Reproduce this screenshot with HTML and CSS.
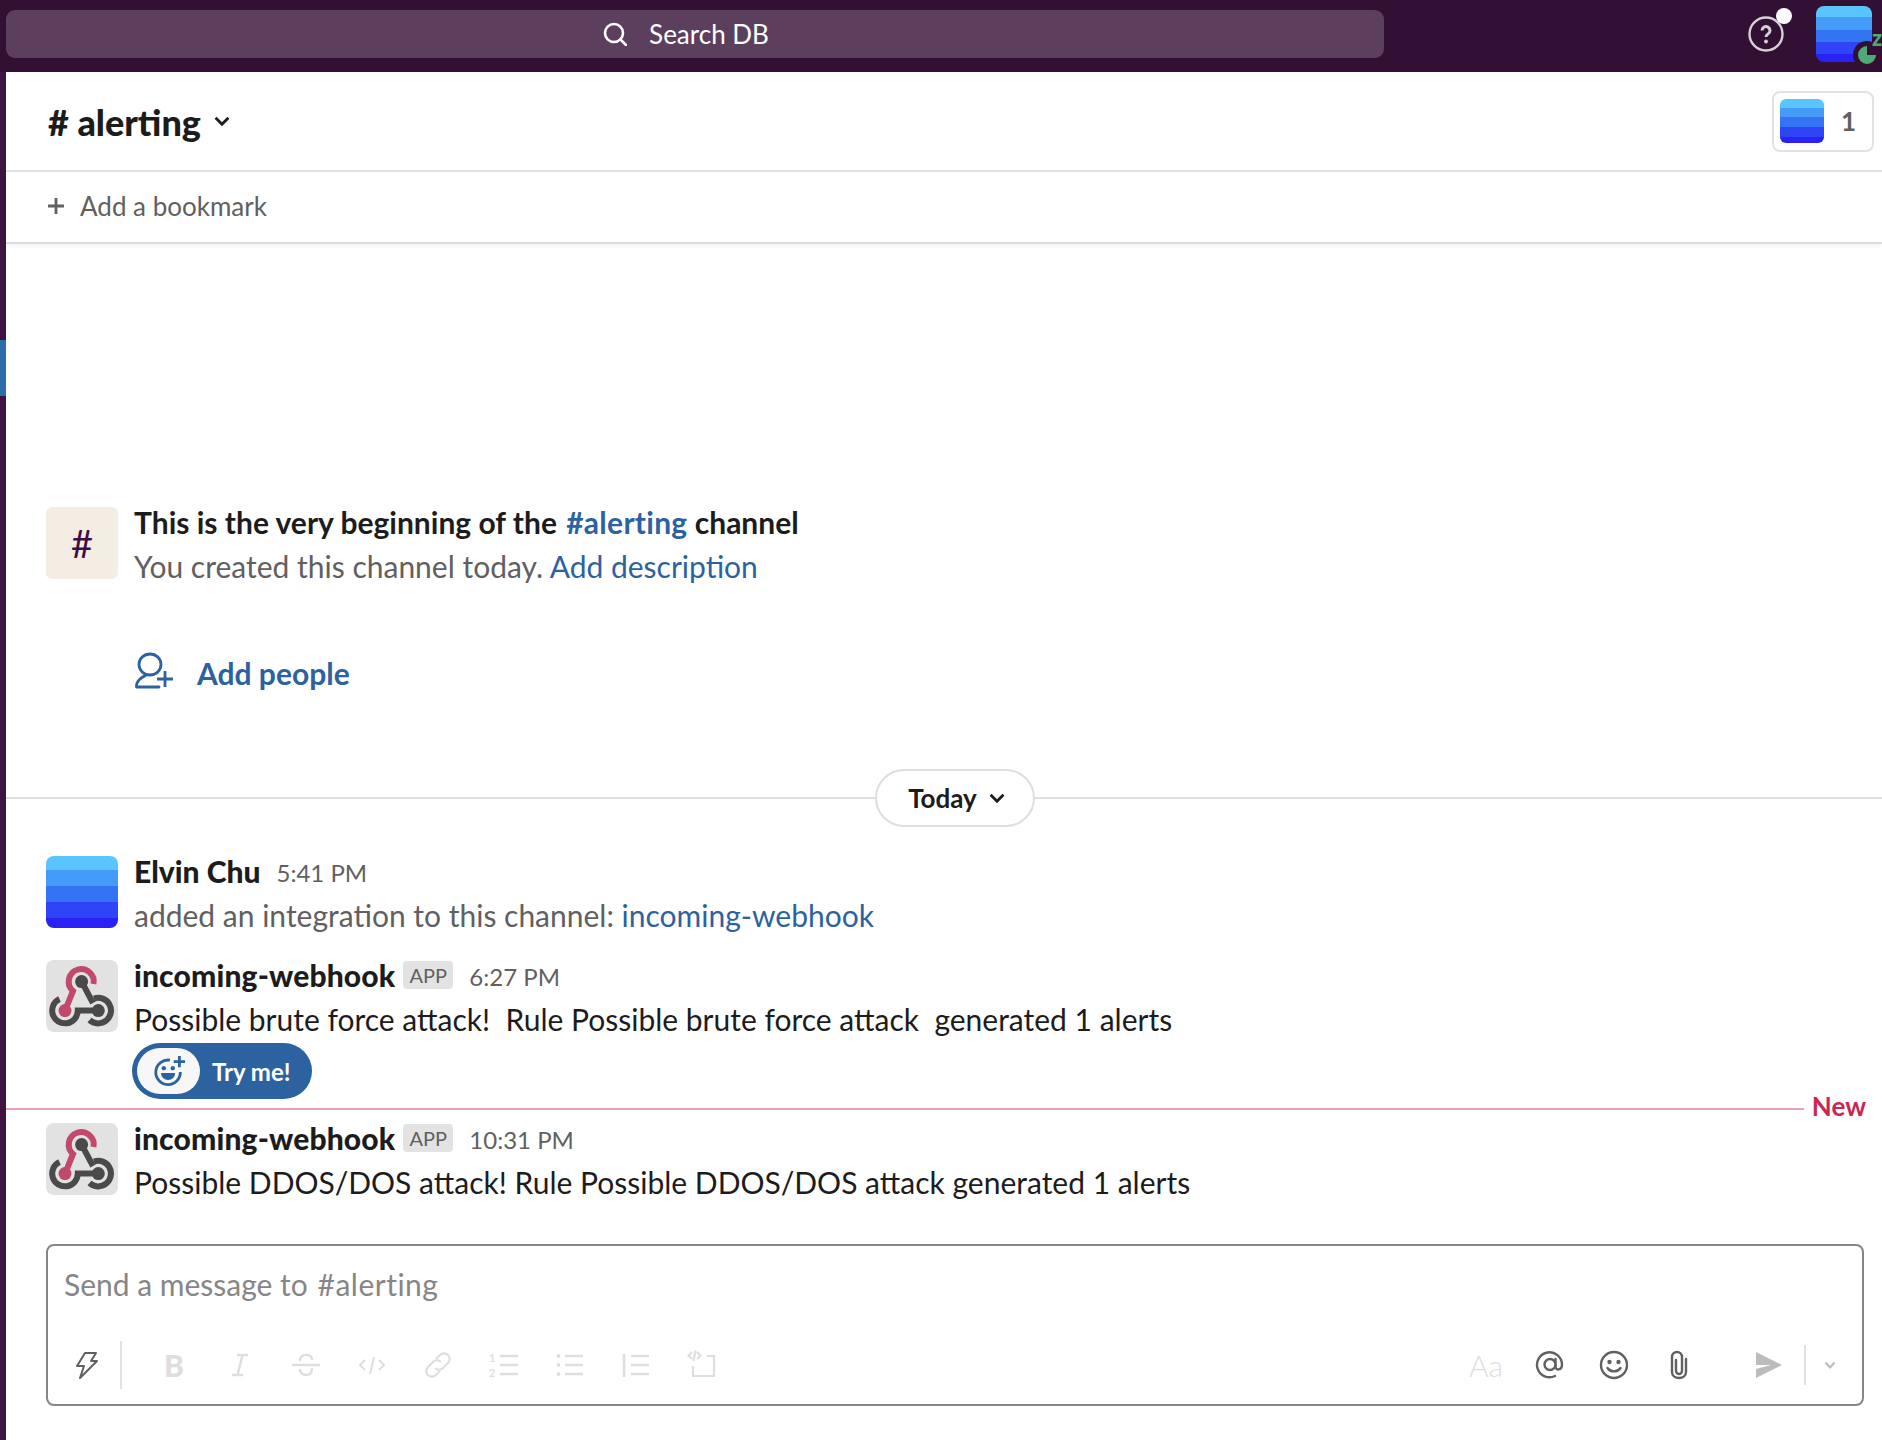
FILE: index.html
```html
<!DOCTYPE html>
<html lang="en">
<head>
<meta charset="utf-8">
<title>#alerting</title>
<link rel="stylesheet" href="styles.css">
</head>
<body>
<svg class="defs" width="0" height="0" aria-hidden="true">
  <symbol id="webhook" viewBox="0 0 72 72">
    <path d="M47.5 24A12.500 12.500 0 1 0 27 31L19 50.600" fill="none" stroke="#c0496c" stroke-width="6"/>
    <circle cx="19" cy="50.600" r="6.500" fill="#c0496c"/>
    <path d="M13.500 39A12.800 12.800 0 1 0 31.800 50.600H52" fill="none" stroke="#4a4a4a" stroke-width="6"/>
    <path d="M35.600 21.600L47 43" fill="none" stroke="#4a4a4a" stroke-width="6"/>
    <path d="M48 38.500A12.800 12.800 0 1 1 43.500 60" fill="none" stroke="#4a4a4a" stroke-width="6"/>
    <circle cx="35.600" cy="21.600" r="6.500" fill="#4a4a4a"/>
    <circle cx="52.300" cy="50.600" r="6.500" fill="#4a4a4a"/>
  </symbol>
</svg>
<div class="app">
  <header class="topbar">
    <div class="search">
      <svg class="search-icon" viewBox="0 0 24 24"><circle cx="11" cy="11" r="9" fill="none" stroke="#fff" stroke-width="2.600"/><path d="M17.500 17.500L23 23" stroke="#fff" stroke-width="2.600" stroke-linecap="round"/></svg>
      <span>Search DB</span>
    </div>
    <div class="top-actions">
      <div class="help">
        <svg viewBox="0 0 36 36" class="help-icon"><circle cx="18" cy="18" r="16.500" fill="none" stroke="#d6cfd6" stroke-width="2.400"/><path d="M14 14.500a4 4 0 1 1 6 3.500c-1.500 .9-2 1.500-2 3" fill="none" stroke="#d6cfd6" stroke-width="3"/><circle cx="18" cy="25.500" r="1.900" fill="#d6cfd6"/></svg>
        <span class="help-dot"></span>
      </div>
      <div class="me">
        <div class="stripes me-avatar"></div>
        <span class="presence">
          <svg viewBox="0 0 28 28"><path d="M14 5v9h9A9 9 0 1 1 14 5z" fill="#4fa974"/></svg>
        </span>
        <span class="presence-z">z</span>
      </div>
    </div>
  </header>
  <div class="body">
    <div class="strip"><span class="strip-active"></span></div>
    <main class="main">
      <div class="channel-head">
        <h1 class="channel-title"># alerting</h1>
        <svg class="chev" viewBox="0 0 14 14"><path d="M2 4.500L7 9.500l5-5" fill="none" stroke="#1d1c1d" stroke-width="2.200"/></svg>
        <div class="members"><div class="stripes members-avatar"></div><span>1</span></div>
      </div>
      <div class="bookmarks">
        <svg class="plus" viewBox="0 0 18 18"><path d="M9 1v16M1 9h16" stroke="#616061" stroke-width="2.800"/></svg>
        <span>Add a bookmark</span>
      </div>
      <div class="scroller">
        <section class="intro">
          <div class="intro-hash">#</div>
          <div>
            <div class="line strong">This is the very beginning of the <a class="link tag">#alerting</a> channel</div>
            <div class="line muted">You created this channel today. <a class="link">Add description</a></div>
          </div>
        </section>
        <div class="add-people">
          <svg viewBox="0 0 42 42" class="add-icon"><ellipse cx="16" cy="12.500" rx="11" ry="10.500" fill="none" stroke="#2c62a0" stroke-width="2.800"/><path d="M12 23C7 26 2 29 2.500 35H25" fill="none" stroke="#2c62a0" stroke-width="2.800" stroke-linecap="round" stroke-linejoin="round"/><path d="M31 19v16M23 27h16" fill="none" stroke="#2c62a0" stroke-width="2.800"/></svg>
          <a class="link add-text">Add people</a>
        </div>
        <div class="day">
          <span class="rule rule-left"></span>
          <div class="pill">Today<svg class="chev-small" viewBox="0 0 14 14"><path d="M2 4.500L7 9.500l5-5" fill="none" stroke="#1d1c1d" stroke-width="2.200"/></svg></div>
          <span class="rule"></span>
        </div>
        <article class="msg msg-first">
          <div class="stripes avatar"></div>
          <div class="msg-body">
            <div class="line meta"><b class="name">Elvin Chu</b><time class="time">5:41 PM</time></div>
            <div class="line muted">added an integration to this channel: <a class="link">incoming-webhook</a></div>
          </div>
        </article>
        <article class="msg">
          <div class="avatar app-avatar"><svg><use href="#webhook"/></svg></div>
          <div class="msg-body">
            <div class="line meta"><b class="name name-app">incoming-webhook</b><span class="app-tag">APP</span><time class="time">6:27 PM</time></div>
            <div class="line text">Possible brute force attack!&nbsp; Rule Possible brute force attack&nbsp; generated 1 alerts</div>
            <div class="try">
              <span class="try-knob">
                <svg viewBox="0 0 36 36"><path d="M19 6.500A13 13 0 1 0 30 19" fill="none" stroke="#2c62a0" stroke-width="3"/><path d="M29 2v12M23 8h12" stroke="#2c62a0" stroke-width="3"/><circle cx="12.500" cy="15" r="2.300" fill="#2c62a0"/><circle cx="22" cy="15" r="2.300" fill="#2c62a0"/><path d="M9.500 20h15a7.500 7.500 0 0 1-15 0z" fill="#2c62a0"/></svg>
              </span>
              <span>Try me!</span>
            </div>
          </div>
        </article>
        <div class="new-rule"><span class="new-line"></span><span class="new-label">New</span></div>
        <article class="msg msg-after-rule">
          <div class="avatar app-avatar"><svg><use href="#webhook"/></svg></div>
          <div class="msg-body">
            <div class="line meta"><b class="name name-app">incoming-webhook</b><span class="app-tag">APP</span><time class="time">10:31 PM</time></div>
            <div class="line text">Possible DDOS/DOS attack! Rule Possible DDOS/DOS attack generated 1 alerts</div>
          </div>
        </article>
      </div>
      <div class="composer">
        <div class="placeholder">Send a message to <span class="placeholder-tag">#alerting</span></div>
        <div class="toolbar">
          <span class="tool"><svg viewBox="0 0 30 30" class="ic"><path d="M13 3h11l-5 8h6L8 28l4-12H5z" fill="none" stroke="#616061" stroke-width="2" stroke-linejoin="round"/></svg></span>
          <span class="sep"></span>
          <span class="tool tool-first bold-glyph">B</span>
          <span class="tool"><svg viewBox="0 0 30 30" class="ic"><path d="M12 5h11M7 25h11M17.500 5l-5 20" fill="none" stroke="#dedede" stroke-width="2.400"/></svg></span>
          <span class="tool"><svg viewBox="0 0 30 30" class="ic"><path d="M1 15h28M9 11c-1-8 13-8 12-1M9 19c-.500 8 12.500 8 12 0v-1" fill="none" stroke="#dedede" stroke-width="2.400"/></svg></span>
          <span class="tool"><svg viewBox="0 0 30 30" class="ic"><path d="M8 10l-5 5 5 5M22 10l5 5-5 5M17 7l-4 17" fill="none" stroke="#dedede" stroke-width="2"/></svg></span>
          <span class="tool"><svg viewBox="0 0 30 30" class="ic"><path d="M13 9l4-4a5.500 5.500 0 0 1 8 8l-5 5a5.500 5.500 0 0 1-8 0M17 21l-4 4a5.500 5.500 0 0 1-8-8l5-5a5.500 5.500 0 0 1 8 0" fill="none" stroke="#dedede" stroke-width="2.200"/></svg></span>
          <span class="tool"><svg viewBox="0 0 30 30" class="ic"><path d="M11 6h18M11 15h18M11 24h18" stroke="#dedede" stroke-width="2.600"/><text x="0" y="12" class="ic-num">1</text><text x="0" y="27" class="ic-num">2</text></svg></span>
          <span class="tool"><svg viewBox="0 0 30 30" class="ic"><path d="M10 6h18M10 15h18M10 24h18" stroke="#dedede" stroke-width="2.600"/><circle cx="3.500" cy="6" r="1.900" fill="#dedede"/><circle cx="3.500" cy="15" r="1.900" fill="#dedede"/><circle cx="3.500" cy="24" r="1.900" fill="#dedede"/></svg></span>
          <span class="tool"><svg viewBox="0 0 30 30" class="ic"><path d="M3 4v23M10 6h18M10 15h18M10 24h18" stroke="#dedede" stroke-width="2.600"/></svg></span>
          <span class="tool"><svg viewBox="0 0 30 30" class="ic"><path d="M5 2L1.500 5.500 5 9M10 2l3.500 3.500L10 9M8.500 .5L6.500 11M20 6h7v20H6V16" fill="none" stroke="#dedede" stroke-width="2.200"/></svg></span>
          <span class="tool-spacer"></span>
          <span class="tool tool-right aa">Aa</span>
          <span class="tool tool-right"><svg viewBox="0 0 30 30" class="ic"><circle cx="15" cy="14.500" r="5.500" fill="none" stroke="#616061" stroke-width="2.400"/><path d="M20.500 9v7.500c0 4.500 6.500 4 6.500-2A12.500 12.500 0 1 0 20 26" fill="none" stroke="#616061" stroke-width="2.400" stroke-linecap="round"/></svg></span>
          <span class="tool tool-right"><svg viewBox="0 0 30 30" class="ic"><circle cx="15" cy="15" r="13" fill="none" stroke="#616061" stroke-width="2.400"/><circle cx="10.500" cy="12" r="2.200" fill="#616061"/><circle cx="19.500" cy="12" r="2.200" fill="#616061"/><path d="M8.500 18c3 4.500 10 4.500 13 0" fill="none" stroke="#616061" stroke-width="2.400" stroke-linecap="round"/></svg></span>
          <span class="tool tool-right"><svg viewBox="0 0 30 30" class="ic"><path d="M13 10v11a3 3 0 0 0 6 0V7a5 5 0 0 0-10 0v15c0 8 14 8 14 0V9" fill="none" stroke="#616061" stroke-width="2.400" stroke-linecap="round"/></svg></span>
          <span class="send"><svg viewBox="0 0 28 28" class="send-icon"><path d="M1 1l26 13L1 27v-9l15-4H1z" fill="#bcbcbc"/></svg></span>
          <span class="sep sep-send"></span>
          <span class="more"><svg viewBox="0 0 14 14" class="more-icon"><path d="M2.500 4.500L7 9.500l4.500-5" fill="none" stroke="#bcbcbc" stroke-width="2"/></svg></span>
        </div>
      </div>
    </main>
  </div>
</div>
</body>
</html>
```

FILE: styles.css
```css
* { box-sizing: border-box; }
html, body { margin: 0; height: 100%; }
body { font-family: Lato, "Noto Sans", sans-serif; color: #1d1c1d; background: #fff; overflow: hidden; }
.defs { display: block; height: 0; }
.app { height: 1440px; display: flex; flex-direction: column; }

.stripes { background: linear-gradient(#5ac4ff 0 20%, #459cf8 20% 42%, #3573f5 42% 64%, #2f44f7 64% 86%, #2a22f5 86% 100%); }

.topbar { height: 72px; flex: none; background: #321033; display: flex; align-items: flex-start; padding: 10px 0 0 6px; }
.search { width: 1378px; height: 48px; border-radius: 9px; background: #5b3f5c; color: #fff; display: flex; align-items: center; justify-content: center; gap: 22px; padding-right: 18px; font-size: 26px; }
.search-icon { width: 24px; height: 24px; }
.top-actions { flex: 1; display: flex; padding-left: 364px; margin-top: -4px; }
.help { position: relative; width: 36px; height: 36px; margin-top: 10px; }
.help-icon { display: block; width: 36px; height: 36px; }
.help-dot { position: absolute; left: 28px; top: -8px; width: 16px; height: 16px; border-radius: 50%; background: #fff; }
.me { position: relative; margin-left: 32px; }
.me-avatar { width: 56px; height: 56px; border-radius: 8px; }
.presence { position: absolute; left: 37px; top: 35px; width: 28px; height: 28px; border-radius: 50%; background: #321033; }
.presence svg { display: block; width: 28px; height: 28px; }
.presence-z { position: absolute; left: 56px; top: 21px; font-size: 22px; line-height: 22px; font-weight: 900; color: #4fa974; }

.body { flex: 1; display: flex; min-height: 0; }
.strip { width: 6px; flex: none; background: #3f1340; padding-top: 268px; }
.strip-active { display: block; height: 56px; background: #2c6ca8; }
.main { flex: 1; min-width: 0; display: flex; flex-direction: column; }

.channel-head { height: 100px; flex: none; border-bottom: 2px solid #e2e2e2; display: flex; align-items: center; padding: 0 8px 0 42px; }
.channel-title { margin: 0; padding-top: 2px; font-size: 36px; font-weight: 900; }
.chev { width: 18px; height: 18px; margin-left: 12px; }
.members { margin-left: auto; width: 102px; height: 61px; border: 2px solid #e2e2e2; border-radius: 8px; display: flex; align-items: center; padding-left: 6px; font-size: 26px; font-weight: 700; color: #616061; gap: 17px; }
.members-avatar { width: 44px; height: 44px; border-radius: 6px; }

.bookmarks { height: 72px; flex: none; border-bottom: 2px solid #dcdcdc; box-shadow: 0 2px 4px rgba(0,0,0,.05); display: flex; align-items: center; padding: 0 0 2px 41px; gap: 15px; font-size: 26px; color: #616061; }
.plus { width: 18px; height: 18px; }

.scroller { flex: 1; min-height: 0; display: flex; flex-direction: column; justify-content: flex-end; padding-bottom: 40px; }
.line { height: 44px; line-height: 44px; font-size: 30px; white-space: nowrap; }
.strong { font-weight: 700; }
.muted { color: #616061; }
.text { color: #1d1c1d; }
.link { color: #2c62a0; }
.tag { margin-left: 2px; letter-spacing: .27px; }

.intro { display: flex; gap: 16px; padding-left: 40px; }
.intro-hash { width: 72px; height: 72px; margin-top: 7px; border-radius: 6px; background: #f4ede4; color: #3f0e40; font-size: 38px; display: flex; align-items: center; justify-content: center; }
.add-people { margin-top: 63px; height: 44px; padding-left: 128px; display: flex; align-items: center; gap: 21px; }
.add-icon { width: 42px; height: 42px; }
.add-text { font-size: 30px; font-weight: 700; }

.day { margin-top: 74px; display: flex; align-items: center; }
.rule { flex: 1; height: 2px; background: #dedede; }
.rule-left { flex: none; width: 869px; }
.pill { width: 160px; height: 58px; border: 2px solid #dedede; border-radius: 29px; display: flex; align-items: center; justify-content: center; gap: 11px; padding-left: 4px; font-size: 26px; font-weight: 700; background: #fff; }
.chev-small { width: 18px; height: 18px; }

.msg { display: flex; gap: 16px; padding-left: 40px; margin-top: 16px; }
.msg-first { margin-top: 22px; }
.msg-after-rule { margin-top: 0; }
.avatar { width: 72px; height: 72px; flex: none; margin-top: 7px; border-radius: 8px; }
.app-avatar { background: #e2e2e2; }
.app-avatar svg { display: block; width: 72px; height: 72px; }
.meta { display: flex; align-items: center; }
.name { font-weight: 900; font-size: 30px; }
.name-app { letter-spacing: .15px; }
.time { font-size: 24px; color: #616061; margin-left: 16px; padding-top: 3px; }
.app-tag { margin-left: 8px; width: 50px; height: 28px; border-radius: 4px; background: #e3e3e3; color: #616061; font-size: 20px; line-height: 28px; text-align: center; }

.try { margin-top: 2px; margin-left: -2px; width: 180px; height: 56px; border-radius: 28px; background: #2c62a0; color: #fff; font-size: 24px; font-weight: 700; display: flex; align-items: center; gap: 12px; padding-left: 5px; }
.try-knob { width: 63px; height: 46px; border-radius: 23px; background: #f7f7f7; display: flex; align-items: center; justify-content: center; }
.try-knob svg { width: 34px; height: 34px; }

.new-rule { height: 17px; padding: 2px 16px 0 0; display: flex; align-items: center; gap: 8px; }
.new-line { flex: 1; height: 2px; background: #e8a0b4; }
.new-label { margin-top: -6px; font-size: 26px; font-weight: 700; color: #cd2553; }

.composer { flex: none; margin: 0 18px 34px 40px; height: 162px; border: 2px solid #868686; border-radius: 8px; display: flex; flex-direction: column; padding-left: 6px; }
.placeholder { height: 72px; padding: 16px 0 0 10px; font-size: 30px; line-height: 44px; color: #868686; }
.placeholder-tag { margin-left: 2px; letter-spacing: .5px; }
.toolbar { margin-top: 22px; display: flex; align-items: center; height: 50px; }
.tool { width: 66px; height: 30px; flex: none; display: flex; align-items: center; justify-content: center; }
.tool-first { margin-left: 19px; }
.tool-right { width: 64px; }
.bold-glyph { font-size: 30px; font-weight: 900; color: #dedede; }
.ic { width: 30px; height: 30px; }
.ic-num { font-size: 11px; font-weight: 700; font-family: Lato, sans-serif; fill: #dedede; }
.sep { width: 2px; height: 48px; background: #e2e2e2; flex: none; }
.tool-spacer { flex: 1; }
.aa { font-size: 30px; font-weight: 300; color: #dedede; }
.send { width: 28px; margin-left: 45px; display: flex; }
.send-icon { width: 28px; height: 28px; }
.sep-send { height: 40px; margin-left: 21px; }
.more { width: 14px; margin-left: 17px; margin-right: 25px; display: flex; }
.more-icon { width: 14px; height: 14px; }
```
